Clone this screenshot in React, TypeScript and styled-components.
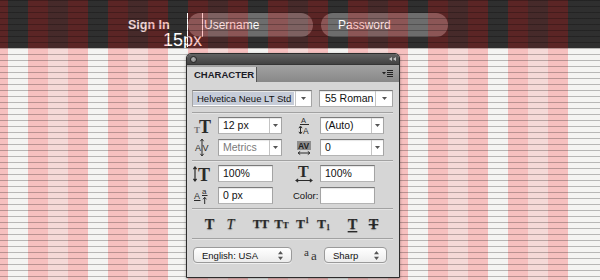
import React from 'react';
import styled, { createGlobalStyle } from 'styled-components';

const GlobalStyle = createGlobalStyle`
  html, body { margin: 0; padding: 0; }
  body {
    background: #f4f4f2;
    font-family: 'Liberation Sans', Arial, sans-serif;
  }
`;

const SERIF = "'Liberation Serif', 'Times New Roman', serif";
const SANS = "'Liberation Sans', Arial, sans-serif";

// --- page + grid overlay ---

const Page = styled.div`
  position: relative;
  width: 600px;
  height: 280px;
  overflow: hidden;
  background: #f4f4f2;
`;

const Columns = styled.div`
  position: absolute;
  top: 0;
  left: 0;
  width: 568px;
  height: 100%;
  pointer-events: none;
  z-index: 1;
  background-image: linear-gradient(
    to right,
    transparent 0 20px,
    rgba(255, 0, 0, 0.21) 20px 40px,
    rgba(255, 0, 0, 0.11) 40px 60px,
    rgba(255, 0, 0, 0.21) 60px 80px
  );
  background-size: 80px 100%;
  background-position: 8px 0;
  background-repeat: repeat-x;
`;

const Baselines = styled.div`
  position: absolute;
  inset: 0;
  pointer-events: none;
  z-index: 1;
  background-image: repeating-linear-gradient(
    to bottom,
    rgba(0, 0, 0, 0.25) 0 1px,
    transparent 1px 6px
  );
`;

// --- dark header with sign in fields ---

const Header = styled.header`
  box-sizing: border-box;
  height: 48px;
  padding: 13px 0 0 128px;
  display: flex;
  align-items: flex-start;
  background: #2f2f2f;
`;

const SignIn = styled.span`
  width: 60px;
  line-height: 24px;
  font-size: 12.5px;
  font-weight: bold;
  color: #f2f2f2;
`;

const Fields = styled.div`
  position: relative;
  display: flex;
  gap: 8px;
`;

const Pill = styled.div<{ $w: number; $indent: number }>`
  box-sizing: border-box;
  width: ${p => p.$w}px;
  height: 24px;
  padding-left: ${p => p.$indent}px;
  border-radius: 12px;
  display: flex;
  align-items: center;
  background: rgba(255, 255, 255, 0.3);
  color: #fff;
  font-size: 12px;
`;

const Caret = styled.span`
  align-self: stretch;
  width: 1px;
  margin-right: 1px;
  background: #fff;
`;

const GuideLine = styled.span`
  position: absolute;
  left: -1px;
  top: 0;
  width: 1px;
  height: 34px;
  background: #fff;
`;

const Measure = styled.span`
  position: absolute;
  left: -25px;
  top: 18px;
  font-size: 18px;
  line-height: 18px;
  color: #fff;
`;

// --- character palette ---

const Stage = styled.div`
  padding: 5px 0 0 186px;
`;

const Palette = styled.div`
  position: relative;
  z-index: 2;
  width: 214px;
  box-sizing: border-box;
  border: 1px solid #2c2c2c;
  border-radius: 5px 5px 0 0;
  overflow: hidden;
  background: #d6d6d6;
  color: #111;
  box-shadow: 0 1px 3px rgba(0, 0, 0, 0.35);
`;

const TitleBar = styled.div`
  height: 10px;
  padding: 0 3px;
  display: flex;
  align-items: center;
  justify-content: space-between;
  background: linear-gradient(#626262, #424242);
`;

const CloseDot = styled.span`
  box-sizing: border-box;
  width: 7px;
  height: 7px;
  border-radius: 50%;
  border: 1px solid #262626;
  background: radial-gradient(circle at 40% 35%, #b0b0b0, #7a7a7a);
`;

const TabBar = styled.div`
  height: 18px;
  display: flex;
  align-items: flex-end;
  border-top: 1px solid #353535;
  box-sizing: border-box;
  background: linear-gradient(#a2a2a2, #888888);
`;

const Tab = styled.div`
  width: 70px;
  height: 15px;
  box-sizing: border-box;
  padding-left: 7px;
  border-right: 1px solid #555;
  background: #d6d6d6;
  font-size: 9.5px;
  font-weight: bold;
  line-height: 15px;
  color: #1b1b26;
`;

const MenuButton = styled.span`
  margin-left: auto;
  align-self: center;
  padding-right: 6px;
  display: flex;
`;

const Section = styled.div<{ $pt: number; $pb: number }>`
  padding: ${p => p.$pt}px 0 ${p => p.$pb}px;
  display: flex;
  flex-direction: column;
  gap: 5px;
`;

const Rule = styled.div`
  height: 1px;
  margin: 0 6px 0 5px;
  background: #a2a2a2;
  box-shadow: 0 1px 0 #e4e4e4;
`;

const FontRow = styled.div`
  display: flex;
  gap: 7px;
  padding-left: 5px;
`;

const Row = styled.div`
  display: flex;
  align-items: center;
  padding-left: 4px;
`;

const Cell = styled.div<{ $w?: number }>`
  display: flex;
  align-items: center;
  width: ${p => (p.$w ? `${p.$w}px` : 'auto')};
`;

const IconBox = styled.span`
  width: 22px;
  height: 17px;
  margin-right: 5px;
  display: flex;
  align-items: center;
  justify-content: center;
  svg { overflow: visible; }
`;

const Label = styled.span`
  width: 25px;
  margin-right: 2px;
  text-align: right;
  font-size: 9.5px;
  color: #111;
`;

const Field = styled.div<{ $w: number; $muted?: boolean; $size?: number }>`
  box-sizing: border-box;
  width: ${p => p.$w}px;
  height: 17px;
  display: flex;
  align-items: stretch;
  background: #fff;
  border: 1px solid #8c8c8c;
  border-color: #7a7a7a #a4a4a4 #b4b4b4 #a4a4a4;
  box-shadow: inset 0 1px 1px rgba(0, 0, 0, 0.1);
  font-size: ${p => p.$size ?? 10.5}px;
  color: ${p => (p.$muted ? '#7a7a7a' : '#111')};
`;

const FieldText = styled.span<{ $pad?: number }>`
  flex: 1;
  padding-left: ${p => p.$pad ?? 4}px;
  line-height: 15px;
  white-space: nowrap;
  overflow: hidden;
`;

const Selection = styled.span`
  display: inline-block;
  margin-top: 1px;
  padding: 0 3px 0 4px;
  line-height: 13px;
  background: #c6ccd8;
`;

const DropSeg = styled.span<{ $w: number }>`
  width: ${p => p.$w}px;
  border-left: 1px solid #c4c4c4;
  display: flex;
  align-items: center;
  justify-content: center;
`;

const GlyphRow = styled.div`
  height: 29px;
  padding: 1px 0 0 12px;
  box-sizing: border-box;
  display: flex;
  align-items: center;
`;

const GlyphGroup = styled.div<{ $after: number }>`
  display: flex;
  margin-right: ${p => p.$after}px;
`;

const Glyph = styled.span<{ $bold?: boolean; $italic?: boolean; $deco?: string; $size?: number; $track?: number }>`
  width: 21px;
  text-align: center;
  white-space: nowrap;
  font-family: ${SERIF};
  font-size: ${p => p.$size ?? 14.5}px;
  line-height: 17px;
  letter-spacing: ${p => p.$track ?? 0}px;
  font-weight: ${p => (p.$bold ? 'bold' : 'normal')};
  font-style: ${p => (p.$italic ? 'italic' : 'normal')};
  color: #2a2a2a;
  text-shadow: 0 1px 1px rgba(0, 0, 0, 0.35);
  text-decoration: ${p => p.$deco ?? 'none'};
  text-decoration-thickness: 1px;
  text-underline-offset: 2px;
`;

const Small = styled.span<{ $shift?: number; $size: number }>`
  font-size: ${p => p.$size}px;
  position: relative;
  top: ${p => p.$shift ?? 0}px;
`;

const PopupRow = styled.div`
  padding: 8px 0 14px 6px;
  display: flex;
  align-items: center;
`;

const Popup = styled.div<{ $w: number; $pr: number }>`
  box-sizing: border-box;
  width: ${p => p.$w}px;
  height: 16px;
  padding: 0 ${p => p.$pr}px 0 8px;
  border: 1px solid #9a9a9a;
  border-radius: 4px;
  display: flex;
  align-items: center;
  justify-content: space-between;
  background: linear-gradient(#ffffff, #ececec);
  box-shadow: 0 1px 0 rgba(255, 255, 255, 0.6);
  font-size: 9.5px;
  color: #111;
`;

const AliasIcon = styled.span`
  width: 16px;
  height: 14px;
  margin: 0 4px 0 12px;
  display: flex;
  svg { overflow: visible; }
`;

// --- small drawings ---

const DownTri = () => (
  <svg width="5" height="3" viewBox="0 0 5 3">
    <path d="M0 0h5L2.5 3z" fill="#555" />
  </svg>
);

const UpDown = () => (
  <svg width="5" height="9" viewBox="0 0 5 9">
    <path d="M2.5 0L5 3.2H0zM2.5 9L0 5.8h5z" fill="#555" />
  </svg>
);

const Collapse = () => (
  <svg width="7" height="4" viewBox="0 0 7 4">
    <path d="M0 2L3 0v4zM4 2L7 0v4z" fill="#c4c4c4" />
  </svg>
);

const MenuIcon = () => (
  <svg width="11" height="7" viewBox="0 0 11 7">
    <path d="M0 2h4L2 4.5z" fill="#222" />
    <path d="M5 0h6v1H5zM5 2h6v1H5zM5 4h6v1H5zM5 6h6v1H5z" fill="#222" />
  </svg>
);

// vertical / horizontal double-headed arrows as paths
const vArrow = (x: number, y1: number, y2: number) =>
  `M${x} ${y1 + 1}V${y2 - 1}M${x - 1.6} ${y1 + 2.2}L${x} ${y1}L${x + 1.6} ${y1 + 2.2}M${x - 1.6} ${y2 - 2.2}L${x} ${y2}L${x + 1.6} ${y2 - 2.2}`;
const hArrow = (y: number, x1: number, x2: number) =>
  `M${x1 + 1} ${y}H${x2 - 1}M${x1 + 2.2} ${y - 1.6}L${x1} ${y}L${x1 + 2.2} ${y + 1.6}M${x2 - 2.2} ${y - 1.6}L${x2} ${y}L${x2 - 2.2} ${y + 1.6}`;

const SizeIcon = () => (
  <svg width="22" height="17" viewBox="0 0 22 17">
    <text x="3" y="16" fontFamily={SERIF} fontSize="9" fontWeight="bold" fill="#777">T</text>
    <text x="8" y="16" fontFamily={SERIF} fontSize="18" fontWeight="bold" fill="#2a2a2a">T</text>
  </svg>
);

const LeadingIcon = () => (
  <svg width="22" height="17" viewBox="0 0 22 17">
    <text x="8" y="6" fontFamily={SANS} fontSize="7.5" fill="#2a2a2a">A</text>
    <path d="M7 7.5h9" stroke="#2a2a2a" strokeWidth="1" />
    <path d={vArrow(7.5, 9, 17)} stroke="#2a2a2a" strokeWidth="1" fill="none" />
    <text x="10" y="16.5" fontFamily={SANS} fontSize="8.5" fill="#2a2a2a">A</text>
  </svg>
);

const TrackingIcon = () => (
  <svg width="22" height="17" viewBox="0 0 22 17">
    <text x="4" y="12" fontFamily={SANS} fontSize="9" fill="#2a2a2a">A</text>
    <text x="11.5" y="12" fontFamily={SANS} fontSize="9" fill="#2a2a2a">V</text>
    <path d={vArrow(11, 0, 17)} stroke="#2a2a2a" strokeWidth="1" fill="none" />
  </svg>
);

const KerningIcon = () => (
  <svg width="22" height="17" viewBox="0 0 22 17">
    <rect x="4" y="2" width="14" height="9" fill="#8e8e8e" />
    <text x="5" y="10" fontFamily={SANS} fontSize="8.5" fontWeight="bold" fill="#1e1e1e">AV</text>
    <path d={hArrow(14, 5, 17)} stroke="#2a2a2a" strokeWidth="1" fill="none" />
  </svg>
);

const VScaleIcon = () => (
  <svg width="22" height="17" viewBox="0 0 22 17">
    <path d={vArrow(4, 2, 16)} stroke="#2a2a2a" strokeWidth="1.2" fill="none" />
    <text x="7" y="16" fontFamily={SERIF} fontSize="18" fontWeight="bold" fill="#2a2a2a">T</text>
  </svg>
);

const HScaleIcon = () => (
  <svg width="22" height="17" viewBox="0 0 22 17">
    <text x="5" y="12" fontFamily={SERIF} fontSize="16" fontWeight="bold" fill="#2a2a2a">T</text>
    <path d={hArrow(15.5, 3, 19)} stroke="#2a2a2a" strokeWidth="1.1" fill="none" />
  </svg>
);

const BaselineIcon = () => (
  <svg width="22" height="17" viewBox="0 0 22 17">
    <text x="3" y="12" fontFamily={SANS} fontSize="9" fill="#2a2a2a">A</text>
    <path d="M3 13.5h6.5" stroke="#2a2a2a" strokeWidth="1" />
    <text x="11" y="7" fontFamily={SANS} fontSize="8" fill="#2a2a2a">a</text>
    <path d="M11 8.5h5.5" stroke="#2a2a2a" strokeWidth="1" />
    <path d="M13.7 17V10.5M12 12.3L13.7 10.3L15.4 12.3" stroke="#2a2a2a" strokeWidth="1" fill="none" />
  </svg>
);

const AntiAliasGlyphs = () => (
  <svg width="16" height="14" viewBox="0 0 16 14">
    <text x="0" y="8" fontFamily={SERIF} fontSize="11" fill="#333">a</text>
    <text x="7" y="12" fontFamily={SERIF} fontSize="13" fill="#333">a</text>
  </svg>
);

// --- component ---

const App: React.FC = () => {
  return (
    <Page>
      <GlobalStyle />

      <Header>
        <SignIn>Sign In</SignIn>
        <Fields>
          <GuideLine />
          <Measure>15px</Measure>
          <Pill $w={125} $indent={14}>
            <Caret />
            Username
          </Pill>
          <Pill $w={127} $indent={17}>Password</Pill>
        </Fields>
      </Header>

      <Stage>
        <Palette>
          <TitleBar>
            <CloseDot />
            <Collapse />
          </TitleBar>
          <TabBar>
            <Tab>CHARACTER</Tab>
            <MenuButton><MenuIcon /></MenuButton>
          </TabBar>

          {/* font family / style */}
          <Section $pt={8} $pb={5}>
            <FontRow>
              <Field $w={120} $size={9.5}>
                <FieldText $pad={0}><Selection>Helvetica Neue LT Std</Selection></FieldText>
                <DropSeg $w={15}><DownTri /></DropSeg>
              </Field>
              <Field $w={74}>
                <FieldText $pad={5}>55 Roman</FieldText>
                <DropSeg $w={16}><DownTri /></DropSeg>
              </Field>
            </FontRow>
          </Section>
          <Rule />

          {/* size, leading, tracking, kerning */}
          <Section $pt={4} $pb={4}>
            <Row>
              <Cell $w={102}>
                <IconBox><SizeIcon /></IconBox>
                <Field $w={64}>
                  <FieldText>12 px</FieldText>
                  <DropSeg $w={11}><DownTri /></DropSeg>
                </Field>
              </Cell>
              <Cell>
                <IconBox><LeadingIcon /></IconBox>
                <Field $w={64}>
                  <FieldText>(Auto)</FieldText>
                  <DropSeg $w={11}><DownTri /></DropSeg>
                </Field>
              </Cell>
            </Row>
            <Row>
              <Cell $w={102}>
                <IconBox><TrackingIcon /></IconBox>
                <Field $w={64} $muted>
                  <FieldText>Metrics</FieldText>
                  <DropSeg $w={11}><DownTri /></DropSeg>
                </Field>
              </Cell>
              <Cell>
                <IconBox><KerningIcon /></IconBox>
                <Field $w={64}>
                  <FieldText>0</FieldText>
                  <DropSeg $w={11}><DownTri /></DropSeg>
                </Field>
              </Cell>
            </Row>
          </Section>
          <Rule />

          {/* scale, baseline, colour */}
          <Section $pt={4} $pb={4}>
            <Row>
              <Cell $w={102}>
                <IconBox><VScaleIcon /></IconBox>
                <Field $w={55}><FieldText>100%</FieldText></Field>
              </Cell>
              <Cell>
                <IconBox><HScaleIcon /></IconBox>
                <Field $w={55}><FieldText>100%</FieldText></Field>
              </Cell>
            </Row>
            <Row>
              <Cell $w={102}>
                <IconBox><BaselineIcon /></IconBox>
                <Field $w={55}><FieldText>0 px</FieldText></Field>
              </Cell>
              <Cell>
                <Label>Color:</Label>
                <Field $w={55} />
              </Cell>
            </Row>
          </Section>
          <Rule />

          {/* faux styles */}
          <GlyphRow>
            <GlyphGroup $after={9}>
              <Glyph $bold>T</Glyph>
              <Glyph $italic>T</Glyph>
            </GlyphGroup>
            <GlyphGroup $after={8}>
              <Glyph $bold $size={13} $track={-1}>TT</Glyph>
              <Glyph $bold $size={13}>T<Small $size={9}>T</Small></Glyph>
              <Glyph $bold $size={13.5}>T<Small $size={7.5} $shift={-5}>1</Small></Glyph>
              <Glyph $bold $size={13.5}>T<Small $size={7.5} $shift={2}>1</Small></Glyph>
            </GlyphGroup>
            <GlyphGroup $after={0}>
              <Glyph $bold $deco="underline">T</Glyph>
              <Glyph $bold $deco="line-through">T</Glyph>
            </GlyphGroup>
          </GlyphRow>
          <Rule />

          {/* language / anti-aliasing */}
          <PopupRow>
            <Popup $w={99} $pr={8}>
              English: USA
              <UpDown />
            </Popup>
            <AliasIcon><AntiAliasGlyphs /></AliasIcon>
            <Popup $w={63} $pr={7}>
              Sharp
              <UpDown />
            </Popup>
          </PopupRow>
        </Palette>
      </Stage>

      <Columns />
      <Baselines />
    </Page>
  );
};

export default App;
